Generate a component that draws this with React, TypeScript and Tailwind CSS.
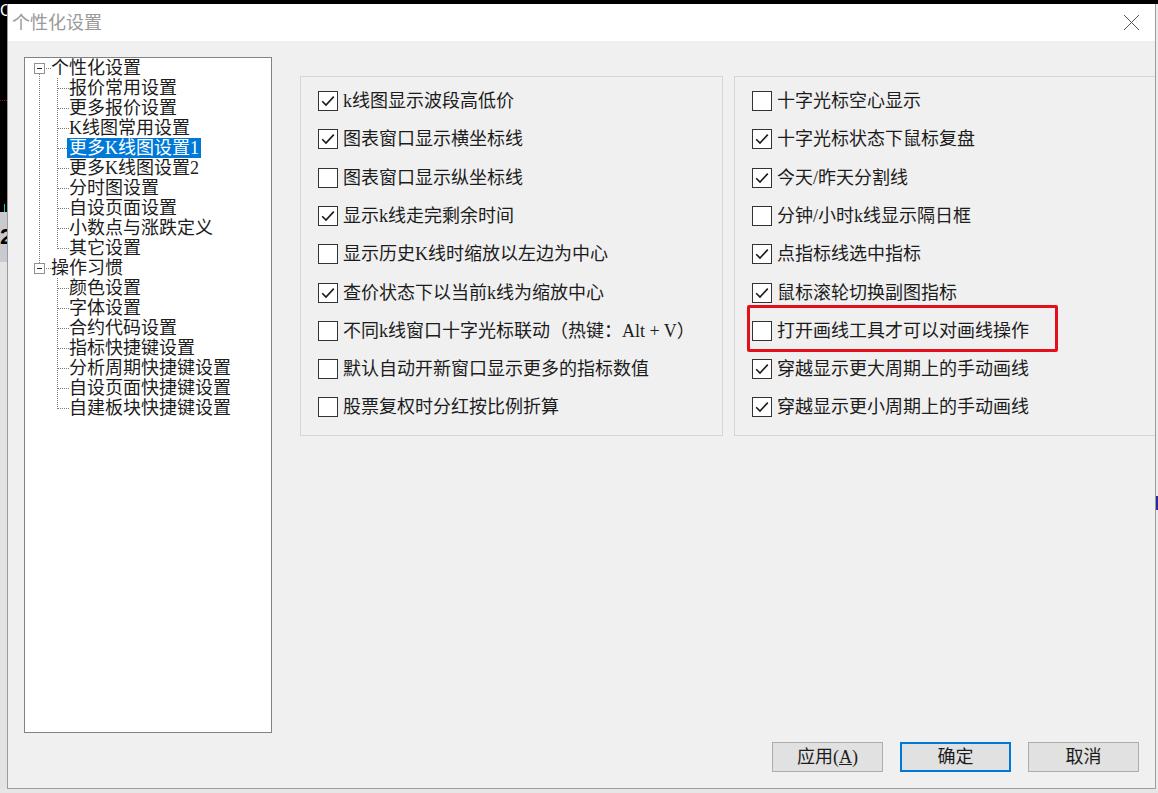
import React from "react";

type TreeItem =
  | { kind: "root"; label: string; hasPrev: boolean; hasNext: boolean }
  | { kind: "child"; label: string; rootLine: boolean; last: boolean; selected?: boolean };

const tree: TreeItem[] = [
  { kind: "root", label: "个性化设置", hasPrev: false, hasNext: true },
  { kind: "child", label: "报价常用设置", rootLine: true, last: false },
  { kind: "child", label: "更多报价设置", rootLine: true, last: false },
  { kind: "child", label: "K线图常用设置", rootLine: true, last: false },
  { kind: "child", label: "更多K线图设置1", rootLine: true, last: false, selected: true },
  { kind: "child", label: "更多K线图设置2", rootLine: true, last: false },
  { kind: "child", label: "分时图设置", rootLine: true, last: false },
  { kind: "child", label: "自设页面设置", rootLine: true, last: false },
  { kind: "child", label: "小数点与涨跌定义", rootLine: true, last: false },
  { kind: "child", label: "其它设置", rootLine: true, last: true },
  { kind: "root", label: "操作习惯", hasPrev: true, hasNext: false },
  { kind: "child", label: "颜色设置", rootLine: false, last: false },
  { kind: "child", label: "字体设置", rootLine: false, last: false },
  { kind: "child", label: "合约代码设置", rootLine: false, last: false },
  { kind: "child", label: "指标快捷键设置", rootLine: false, last: false },
  { kind: "child", label: "分析周期快捷键设置", rootLine: false, last: false },
  { kind: "child", label: "自设页面快捷键设置", rootLine: false, last: false },
  { kind: "child", label: "自建板块快捷键设置", rootLine: false, last: true },
];

const leftOpts: [string, boolean][] = [
  ["k线图显示波段高低价", true],
  ["图表窗口显示横坐标线", true],
  ["图表窗口显示纵坐标线", false],
  ["显示k线走完剩余时间", true],
  ["显示历史K线时缩放以左边为中心", false],
  ["查价状态下以当前k线为缩放中心", true],
  ["不同k线窗口十字光标联动（热键：Alt + V）", false],
  ["默认自动开新窗口显示更多的指标数值", false],
  ["股票复权时分红按比例折算", false],
];

const rightOpts: [string, boolean][] = [
  ["十字光标空心显示", false],
  ["十字光标状态下鼠标复盘", true],
  ["今天/昨天分割线", true],
  ["分钟/小时k线显示隔日框", false],
  ["点指标线选中指标", true],
  ["鼠标滚轮切换副图指标", true],
  ["打开画线工具才可以对画线操作", false],
  ["穿越显示更大周期上的手动画线", true],
  ["穿越显示更小周期上的手动画线", true],
];

const rowHeights = ["h-[38px]", "h-[38px]", "h-[39px]", "h-[38px]", "h-[38px]", "h-[39px]", "h-[38px]", "h-[38px]", "h-[38px]"];

const DOT = "#7a7a7a";

function RootCell({ hasPrev, hasNext }: { hasPrev: boolean; hasNext: boolean }) {
  return (
    <svg width="26" height="20" viewBox="0 0 26 20" shapeRendering="crispEdges" className="shrink-0">
      {hasPrev && <line x1="14.5" y1="0" x2="14.5" y2="5" stroke={DOT} strokeDasharray="1 1" />}
      {hasNext && <line x1="14.5" y1="16" x2="14.5" y2="20" stroke={DOT} strokeDasharray="1 1" />}
      <line x1="21" y1="10.5" x2="26" y2="10.5" stroke={DOT} strokeDasharray="1 1" />
      <rect x="9.5" y="5.5" width="10" height="10" fill="#ffffff" stroke="#919191" />
      <line x1="12" y1="10.5" x2="17" y2="10.5" stroke="#222" />
    </svg>
  );
}

function ChildCells({ rootLine, last }: { rootLine: boolean; last: boolean }) {
  return (
    <>
      <svg width="26" height="20" viewBox="0 0 26 20" shapeRendering="crispEdges" className="shrink-0">
        {rootLine && <line x1="14.5" y1="0" x2="14.5" y2="20" stroke={DOT} strokeDasharray="1 1" />}
      </svg>
      <svg width="18" height="20" viewBox="0 0 18 20" shapeRendering="crispEdges" className="shrink-0">
        <line x1="6.5" y1="0" x2="6.5" y2={last ? 11 : 20} stroke={DOT} strokeDasharray="1 1" />
        <line x1="7" y1="10.5" x2="18" y2="10.5" stroke={DOT} strokeDasharray="1 1" />
      </svg>
    </>
  );
}

function Check({ on }: { on: boolean }) {
  return (
    <div className="w-[20px] h-[20px] shrink-0 border border-[#333333] bg-white flex items-center justify-center">
      {on && (
        <svg width="18" height="18" viewBox="0 0 18 18">
          <path d="M3.2 9.2 L7 13 L14.8 4.6" fill="none" stroke="#1a1a1a" strokeWidth="1.6" />
        </svg>
      )}
    </div>
  );
}

function OptionRow({ label, on, idx }: { label: string; on: boolean; idx: number }) {
  return (
    <div className={`${rowHeights[idx]} flex items-center`}>
      <Check on={on} />
      <span className="ml-[5px] text-[18px] leading-[20px] text-[#1c1c1c] whitespace-nowrap">{label}</span>
    </div>
  );
}

export default function App() {
  return (
    <div className="w-[1158px] h-[793px] overflow-hidden flex flex-col bg-[#e6e6e6] font-['Liberation_Serif','Noto_Sans_CJK_SC',serif]">
      <div className="h-[4px] bg-black shrink-0" />
      <div className="flex h-[785px] shrink-0">
        {/* background app strip on the left */}
        <div className="w-[7px] shrink-0 flex flex-col overflow-hidden">
          <div className="h-[208px] bg-black flex flex-col">
            <div className="h-[16px] text-white text-[16px] leading-[14px] overflow-hidden font-['Liberation_Sans',sans-serif]">C</div>
            <div className="h-[80px]" />
            <div className="h-[1px] border-t border-dotted border-[#8a1a1a]" />
            <div className="h-[103px]" />
            <div className="h-[8px] w-[1px] ml-[4px] bg-[#19c4c4]" />
          </div>
          <div className="h-[50px] bg-[#c9c9d0] text-black text-[22px] font-bold leading-[50px] overflow-hidden font-['Liberation_Sans',sans-serif]">2</div>
          <div className="flex-1 bg-[#e3e3e3]" />
        </div>

        {/* dialog */}
        <div className="w-[1149px] shrink-0 flex flex-col border-l border-r border-b border-[#9c9c9c] overflow-hidden">
          <div className="h-[37px] shrink-0 bg-white flex items-center justify-between pl-[4px] pr-[15px]">
            <span className="text-[18px] leading-[20px] text-[#9a9a9a]">个性化设置</span>
            <svg width="17" height="17" viewBox="0 0 17 17">
              <path d="M1 1 L16 16 M16 1 L1 16" stroke="#555" strokeWidth="1" fill="none" />
            </svg>
          </div>

          <div className="flex-1 bg-[#f0f0f0] flex flex-col pt-[16px] pl-[16px]">
            <div className="h-[676px] flex">
              {/* tree */}
              <div className="w-[248px] h-[676px] shrink-0 border border-[#828282] bg-white flex flex-col">
                {tree.map((it, i) => (
                  <div key={i} className="h-[20px] flex items-center">
                    {it.kind === "root" ? (
                      <>
                        <RootCell hasPrev={it.hasPrev} hasNext={it.hasNext} />
                        <span className="text-[18px] leading-[20px] text-[#1c1c1c] whitespace-nowrap">{it.label}</span>
                      </>
                    ) : (
                      <>
                        <ChildCells rootLine={it.rootLine} last={it.last} />
                        {it.selected ? (
                          <span className="-ml-[2px] px-[2px] bg-[#0078d7] text-white text-[18px] leading-[20px] whitespace-nowrap">
                            {it.label}
                          </span>
                        ) : (
                          <span className="text-[18px] leading-[20px] text-[#1c1c1c] whitespace-nowrap">{it.label}</span>
                        )}
                      </>
                    )}
                  </div>
                ))}
              </div>

              {/* option groups */}
              <div className="ml-[28px] mt-[19px] flex gap-[11px] items-start">
                <div className="w-[423px] h-[360px] shrink-0 border border-[#d6d6d6] pt-[5px] pl-[17px] flex flex-col">
                  {leftOpts.map(([l, on], i) => (
                    <OptionRow key={i} label={l} on={on} idx={i} />
                  ))}
                </div>
                <div className="relative w-[440px] h-[360px] shrink-0 border border-[#d6d6d6] pt-[5px] pl-[17px] flex flex-col">
                  {rightOpts.map(([l, on], i) => (
                    <OptionRow key={i} label={l} on={on} idx={i} />
                  ))}
                  <div className="absolute left-[12px] top-[228px] w-[311px] h-[47px] border-[3px] border-[#e3101b] rounded-[2px]" />
                </div>
              </div>
            </div>

            <div className="mt-[9px] flex justify-end gap-[17px] pr-[16px]">
              <div className="w-[111px] h-[30px] border border-[#adadad] bg-[#e1e1e1] flex items-center justify-center text-[18px] leading-[20px] text-[#1c1c1c]">
                <span>
                  应用(<span className="underline">A</span>)
                </span>
              </div>
              <div className="w-[111px] h-[30px] border-2 border-[#0078d7] bg-[#e1e1e1] flex items-center justify-center text-[18px] leading-[20px] text-[#1c1c1c]">
                确定
              </div>
              <div className="w-[111px] h-[30px] border border-[#adadad] bg-[#e1e1e1] flex items-center justify-center text-[18px] leading-[20px] text-[#1c1c1c]">
                取消
              </div>
            </div>
          </div>
        </div>

        {/* background app strip on the right */}
        <div className="w-[2px] shrink-0 bg-[#ececec] flex flex-col">
          <div className="h-[492px]" />
          <div className="h-[14px] bg-[#2a2a9a]" />
          <div className="flex-1" />
        </div>
      </div>
      <div className="flex-1 bg-[#e6e6e6]" />
    </div>
  );
}
